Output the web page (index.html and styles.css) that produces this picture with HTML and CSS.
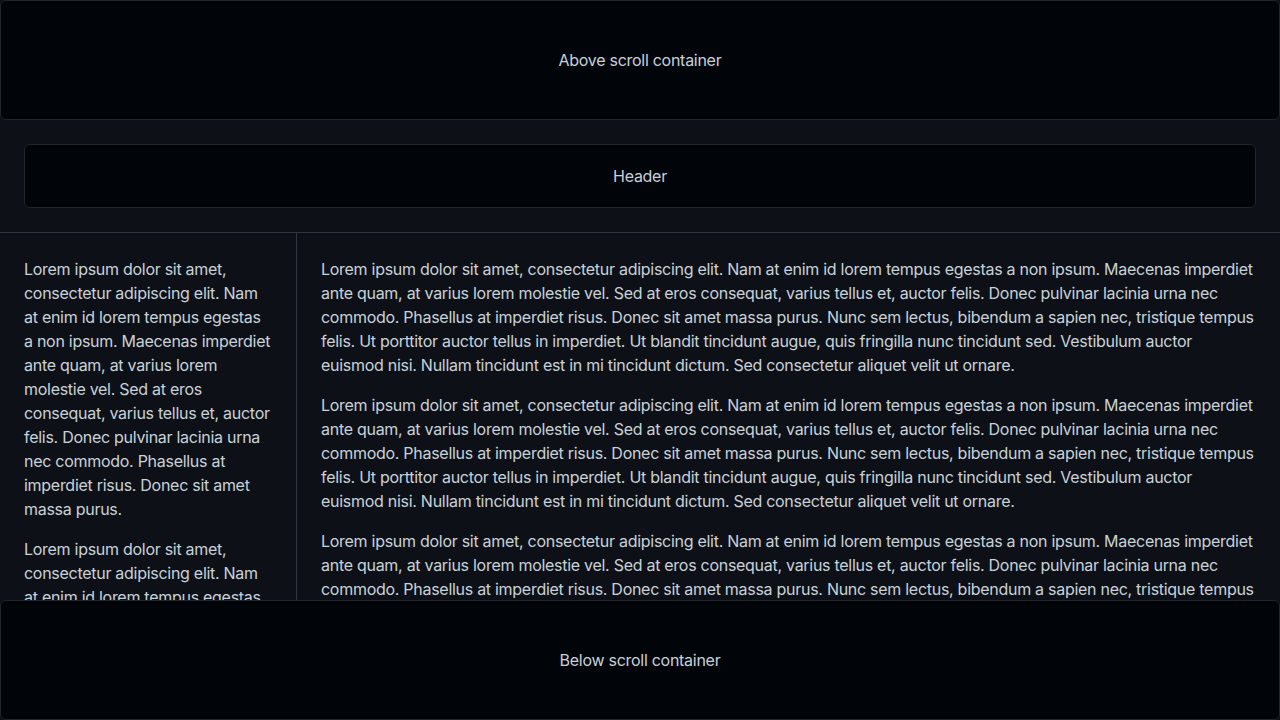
FILE: index.html
```html
<!DOCTYPE html>
<html lang="en">
<head>
<meta charset="utf-8">
<title>Scroll container</title>
<link rel="stylesheet" href="styles.css">
</head>
<body>
<div class="app">
  <div class="box box-edge">Above scroll container</div>
  <div class="scroller">
    <div class="page-header">
      <div class="box header-box">Header</div>
    </div>
    <div class="columns">
      <aside class="pane">
        <p>Lorem ipsum dolor sit amet, consectetur adipiscing elit. Nam at enim id lorem tempus egestas a non ipsum. Maecenas imperdiet ante quam, at varius lorem molestie vel. Sed at eros consequat, varius tellus et, auctor felis. Donec pulvinar lacinia urna nec commodo. Phasellus at imperdiet risus. Donec sit amet massa purus.</p>
        <p>Lorem ipsum dolor sit amet, consectetur adipiscing elit. Nam at enim id lorem tempus egestas a non ipsum. Maecenas imperdiet ante quam, at varius lorem molestie vel.</p>
      </aside>
      <main class="content">
        <p>Lorem ipsum dolor sit amet, consectetur adipiscing elit. Nam at enim id lorem tempus egestas a non ipsum. Maecenas imperdiet ante quam, at varius lorem molestie vel. Sed at eros consequat, varius tellus et, auctor felis. Donec pulvinar lacinia urna nec commodo. Phasellus at imperdiet risus. Donec sit amet massa purus. Nunc sem lectus, bibendum a sapien nec, tristique tempus felis. Ut porttitor auctor tellus in imperdiet. Ut blandit tincidunt augue, quis fringilla nunc tincidunt sed. Vestibulum auctor euismod nisi. Nullam tincidunt est in mi tincidunt dictum. Sed consectetur aliquet velit ut ornare.</p>
        <p>Lorem ipsum dolor sit amet, consectetur adipiscing elit. Nam at enim id lorem tempus egestas a non ipsum. Maecenas imperdiet ante quam, at varius lorem molestie vel. Sed at eros consequat, varius tellus et, auctor felis. Donec pulvinar lacinia urna nec commodo. Phasellus at imperdiet risus. Donec sit amet massa purus. Nunc sem lectus, bibendum a sapien nec, tristique tempus felis. Ut porttitor auctor tellus in imperdiet. Ut blandit tincidunt augue, quis fringilla nunc tincidunt sed. Vestibulum auctor euismod nisi. Nullam tincidunt est in mi tincidunt dictum. Sed consectetur aliquet velit ut ornare.</p>
        <p>Lorem ipsum dolor sit amet, consectetur adipiscing elit. Nam at enim id lorem tempus egestas a non ipsum. Maecenas imperdiet ante quam, at varius lorem molestie vel. Sed at eros consequat, varius tellus et, auctor felis. Donec pulvinar lacinia urna nec commodo. Phasellus at imperdiet risus. Donec sit amet massa purus. Nunc sem lectus, bibendum a sapien nec, tristique tempus felis. Ut porttitor auctor tellus in imperdiet. Ut blandit tincidunt augue, quis fringilla nunc tincidunt sed. Vestibulum auctor euismod nisi. Nullam tincidunt est in mi tincidunt dictum. Sed consectetur aliquet velit ut ornare.</p>
      </main>
    </div>
  </div>
  <div class="box box-edge">Below scroll container</div>
</div>
</body>
</html>
```

FILE: styles.css
```css
* { box-sizing: border-box; }
html, body {
  margin: 0;
  height: 100%;
  background: #0d1117;
}
body {
  font-family: Inter, "Noto Sans", sans-serif;
  font-size: 16px;
  line-height: 24px;
  letter-spacing: -0.28px;
  color: #c9d1d9;
}
.app {
  height: 720px;
  display: flex;
  flex-direction: column;
}
.box {
  display: flex;
  align-items: center;
  justify-content: center;
  background: #010409;
  border: 1px solid #21262d;
  border-radius: 6px;
}
.box-edge {
  height: 120px;
  flex: none;
}
.scroller {
  flex: 1;
  min-height: 0;
  overflow: hidden;
}
.page-header {
  padding: 24px;
  border-bottom: 1px solid #30363d;
}
.header-box {
  height: 64px;
}
.columns {
  display: flex;
}
.pane {
  width: 297px;
  flex: none;
  padding: 24px;
  border-right: 1px solid #30363d;
}
.content {
  flex: 1;
  padding: 24px;
}
p {
  margin: 0 0 16px;
}
```
